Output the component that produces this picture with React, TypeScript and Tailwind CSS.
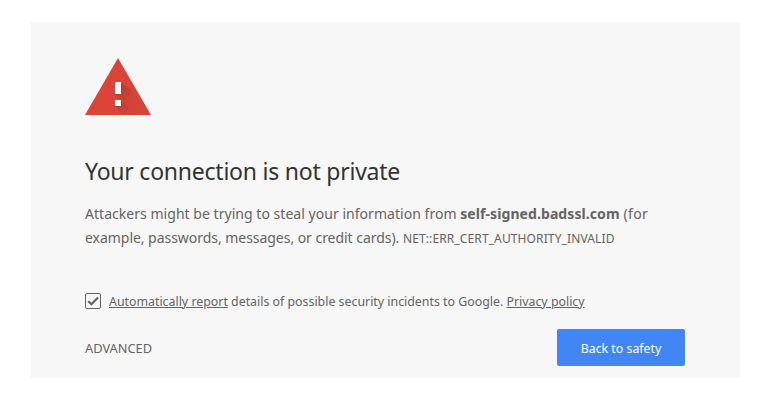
function WarningIcon() {
  return (
    <svg width="66" height="57" viewBox="0 0 66 57" className="block">
      <defs>
        <linearGradient id="shade" x1="33" y1="30" x2="47" y2="44" gradientUnits="userSpaceOnUse">
          <stop offset="0" stopColor="#3e2723" stopOpacity="0.22" />
          <stop offset="1" stopColor="#3e2723" stopOpacity="0.02" />
        </linearGradient>
        <linearGradient id="shadeDot" x1="33" y1="45" x2="43" y2="55" gradientUnits="userSpaceOnUse">
          <stop offset="0" stopColor="#3e2723" stopOpacity="0.22" />
          <stop offset="1" stopColor="#3e2723" stopOpacity="0.02" />
        </linearGradient>
      </defs>
      <path d="M33 0 66 57H0z" fill="#db4437" />
      <path d="M36 24 56.5 41 64 55 51 57 30 36z" fill="url(#shade)" />
      <path d="M36 42 51 57H39L30 48z" fill="url(#shadeDot)" />
      <path d="M30 24h6v12h-6zM30 42h6v6h-6z" fill="#fff" />
    </svg>
  );
}

function Checkbox() {
  return (
    <svg width="16" height="16" viewBox="0 0 16 16" className="block shrink-0">
      <rect x="0.5" y="0.5" width="15" height="15" rx="1.5" fill="none" stroke="#646464" />
      <path d="M3.2 8.2 6.4 11.3 13 4.4" fill="none" stroke="#646464" strokeWidth="2.2" />
    </svg>
  );
}

export default function App() {
  return (
    <main className="h-[411px] bg-white pt-[22px] pl-[31px] font-['Noto_Sans',sans-serif] text-[#646464]">
      <div className="h-[356px] w-[709px] bg-[#f7f7f7] pt-9 pr-[55px] pl-[54px]">
        <WarningIcon />

        <h1 className="mt-10 text-[23px] leading-8 font-normal tracking-[-0.23px] whitespace-nowrap text-[#333333]">
          Your connection is not private
        </h1>

        <p className="mt-[15px] text-[14px] leading-6 whitespace-nowrap">
          <span className="tracking-[0.035px]">Attackers might be trying to steal your information from </span>
          <strong className="font-bold tracking-[0.08px]">self-signed.badssl.com</strong>
          <span className="tracking-[0.3px]"> (for</span>
          <br />
          <span className="tracking-[-0.04px]">example, passwords, messages, or credit cards). </span>
          <span className="text-[12px] tracking-[0.12px]">NET::ERR_CERT_AUTHORITY_INVALID</span>
        </p>

        <div className="mt-[42px] flex h-4 items-center gap-2 text-[12.37px] whitespace-nowrap">
          <Checkbox />
          <p className="pt-0.5">
            <a className="underline">Automatically report</a>
            <span> details of possible security incidents to Google. </span>
            <a className="underline">Privacy policy</a>
          </p>
        </div>

        <div className="mt-5 flex items-center justify-between text-[12.35px]">
          <a className="pt-[3px] text-[12.8px]">ADVANCED</a>
          <button className="h-[37px] w-32 rounded-[2px] bg-[#4285f4] pt-[3px] text-white">Back to safety</button>
        </div>
      </div>
    </main>
  );
}
